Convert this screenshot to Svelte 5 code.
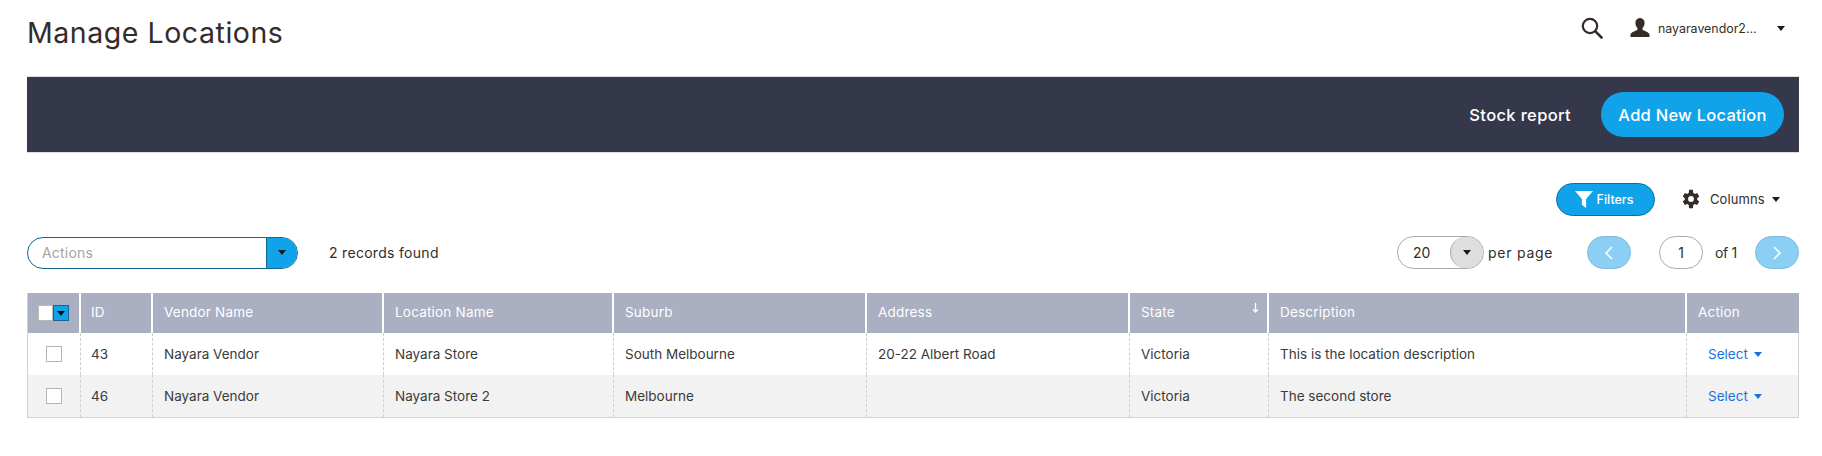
<script>
  const columns = ['ID', 'Vendor Name', 'Location Name', 'Suburb', 'Address', 'State', 'Description', 'Action'];
  const rows = [
    { id: '43', vendor: 'Nayara Vendor', location: 'Nayara Store', suburb: 'South Melbourne', address: '20-22 Albert Road', state: 'Victoria', description: 'This is the location description' },
    { id: '46', vendor: 'Nayara Vendor', location: 'Nayara Store 2', suburb: 'Melbourne', address: '', state: 'Victoria', description: 'The second store' }
  ];
</script>

<div class="page">
  <header class="top">
    <h1>Manage Locations</h1>
    <div class="top-tools">
      <svg class="search" width="22" height="22" viewBox="0 0 22 22" fill="none" stroke="#342c29" stroke-width="2.2"><circle cx="9" cy="9" r="7.2"/><path d="M14.2 14.2 20.5 20.5" stroke-linecap="round" stroke-width="2.6"/></svg>
      <svg class="user" width="20" height="20" viewBox="0 0 20 20" fill="#342c29"><path d="M10 0c-3 0-4.600 2.200-4.600 5 0 2 .8 3.800 2 5 .3.500.2 1.500-.4 2C5.500 13.200 1 14 .5 16.500V19h19v-2.500C19 14 14.500 13.200 13 12c-.6-.5-.7-1.500-.4-2 1.200-1.200 2-3 2-5 0-2.800-1.600-5-4.600-5z"/></svg>
      <span class="username">nayaravendor2...</span>
      <span class="caret dark"></span>
    </div>
  </header>

  <section class="banner">
    <span class="stock">Stock report</span>
    <button class="add">Add New Location</button>
  </section>

  <section class="tools">
    <button class="filters">
      <svg width="18" height="17" viewBox="0 0 17 16" fill="#fff"><path d="M0 0h17L10.500 7.500V16L6.500 13V7.500z"/></svg>
      Filters
    </button>
    <div class="columns">
      <svg width="20" height="20" viewBox="0 0 24 24" fill="#342c29"><path d="M19.400 13c.1-.3.1-.7.1-1s0-.7-.1-1l2.500-2-2.500-4.300-3 1.200c-.5-.4-1.100-.8-1.700-1L14.300 1H9.700l-.4 3.900c-.6.200-1.200.6-1.700 1l-3-1.200L2.100 9l2.500 2c-.1.300-.1.700-.1 1s0 .7.100 1l-2.500 2 2.500 4.300 3-1.200c.5.400 1.100.8 1.700 1l.4 3.900h4.600l.4-3.900c.6-.2 1.200-.6 1.700-1l3 1.200 2.500-4.300zM12 15.500a3.500 3.500 0 1 1 0-7 3.500 3.500 0 0 1 0 7z"/></svg>
      <span>Columns</span>
      <span class="caret dark"></span>
    </div>
  </section>

  <section class="list-bar">
    <div class="actions">
      <span class="placeholder">Actions</span>
      <span class="actions-btn"><span class="caret black"></span></span>
    </div>
    <span class="records">2 records found</span>
    <div class="pager">
      <div class="size">
        <span class="size-value">20</span>
        <span class="size-btn"><span class="caret black"></span></span>
      </div>
      <span class="per">per page</span>
      <button class="nav prev" aria-label="Previous"><svg width="10" height="16" viewBox="0 0 10 16" fill="none" stroke="#fff" stroke-width="1.500"><path d="M8 2 2 8l6 6"/></svg></button>
      <span class="page-no">1</span>
      <span class="of">of 1</span>
      <button class="nav next" aria-label="Next"><svg width="10" height="16" viewBox="0 0 10 16" fill="none" stroke="#fff" stroke-width="1.500"><path d="m2 2 6 6-6 6"/></svg></button>
    </div>
  </section>

  <section class="table">
    <div class="row head">
      <div class="cell check-cell">
        <span class="master"><span class="master-box"></span><span class="master-btn"><span class="caret mini"></span></span></span>
      </div>
      {#each columns as c}
        <div class="cell">
          {c}
          {#if c === 'State'}<svg class="sort" width="7" height="10" viewBox="0 0 7 10" fill="none" stroke="#fff" stroke-width="1.300"><path d="M3.500 0v9M1 6.500 3.500 9 6 6.500"/></svg>{/if}
        </div>
      {/each}
    </div>
    {#each rows as r, i}
      <div class="row body" class:alt={i === 1}>
        <div class="cell check-cell"><span class="box"></span></div>
        <div class="cell">{r.id}</div>
        <div class="cell">{r.vendor}</div>
        <div class="cell">{r.location}</div>
        <div class="cell">{r.suburb}</div>
        <div class="cell">{r.address}</div>
        <div class="cell">{r.state}</div>
        <div class="cell">{r.description}</div>
        <div class="cell select"><span>Select</span><span class="caret blue"></span></div>
      </div>
    {/each}
  </section>
</div>

<style>
  :global(body) {
    margin: 0;
    background: #fff;
    font-family: Inter, "Liberation Sans", sans-serif;
    color: #342c29;
  }
  .page {
    width: 1772px;
    margin-left: 27px;
    font-size: 14px;
  }
  button {
    font-family: inherit;
    border: 0;
    padding: 0;
  }
  .top {
    height: 76px;
    display: flex;
    justify-content: space-between;
  }
  h1 {
    margin: 15px 0 0;
    font-size: 28.500px;
    line-height: 36px;
    font-weight: 400;
    letter-spacing: 0.55px;
  }
  .top-tools {
    display: flex;
    align-items: center;
    height: 56px;
    padding-right: 14px;
  }
  .search { margin-right: 27px; }
  .user { margin-right: 8px; }
  .username { width: 119px; font-size: 12.400px; }
  .caret {
    display: inline-block;
    width: 0;
    height: 0;
    border-left: 4px solid transparent;
    border-right: 4px solid transparent;
    border-top: 5px solid #1b1b1b;
  }
  .banner {
    height: 75px;
    background: #35384b;
    border-top: 1px solid #ddd;
    border-bottom: 1px solid #ddd;
    display: flex;
    align-items: center;
    justify-content: flex-end;
    padding-right: 15px;
  }
  .stock {
    color: #fff;
    font-size: 16.500px;
    font-weight: 500;
    letter-spacing: 0.35px;
    margin-right: 30px;
  }
  .add {
    width: 183px;
    height: 45px;
    border-radius: 23px;
    background: #11a3ea;
    color: #fff;
    font-size: 16.500px;
    font-weight: 500;
    letter-spacing: 0.25px;
  }
  .tools {
    height: 32px;
    margin-top: 30px;
    display: flex;
    align-items: center;
    justify-content: flex-end;
    padding-right: 16px;
  }
  .filters {
    width: 99px;
    height: 33px;
    border: 1px solid #0f6c9d;
    border-radius: 17px;
    background: #11a3ea;
    color: #fff;
    font-size: 12.500px;
    font-weight: 500;
    display: flex;
    align-items: center;
    justify-content: center;
    gap: 4px;
    padding-right: 3px;
    margin-right: 26px;
    box-sizing: border-box;
  }
  .columns {
    display: flex;
    align-items: center;
    font-size: 13px;
    width: 102px;
  }
  .columns span:first-of-type { margin: 0 8px 0 9px; width: 54px; letter-spacing: 0.1px; }
  .list-bar {
    height: 33px;
    margin-top: 21px;
    display: flex;
    align-items: center;
  }
  .actions {
    width: 271px;
    height: 32px;
    box-sizing: border-box;
    border: 1px solid #14678f;
    border-radius: 16px;
    display: flex;
    align-items: center;
    justify-content: space-between;
    overflow: hidden;
  }
  .placeholder {
    margin-left: 14px;
    color: #a4a4a4;
    letter-spacing: 0.2px;
  }
  .actions-btn {
    width: 30px;
    height: 100%;
    background: #11a3ea;
    border-left: 1px solid #14678f;
    display: flex;
    align-items: center;
    justify-content: center;
  }
  .records { margin-left: 31px; letter-spacing: 0.3px; }
  .pager {
    margin-left: auto;
    display: flex;
    align-items: center;
  }
  .size {
    width: 87px;
    height: 33px;
    box-sizing: border-box;
    border: 1px solid #a9a9a9;
    border-radius: 17px;
    display: flex;
    align-items: center;
    justify-content: space-between;
    overflow: hidden;
  }
  .size-value { margin-left: 15px; }
  .size-btn {
    width: 32px;
    height: 100%;
    background: #dedede;
    border-left: 1px solid #a9a9a9;
    border-radius: 16px;
    display: flex;
    align-items: center;
    justify-content: center;
  }
  .per { margin-left: 4px; width: 99px; letter-spacing: 0.75px; }
  .nav {
    width: 44px;
    height: 33px;
    border-radius: 17px;
    background: #8bd0f4;
    border: 1px solid #7fb9d8;
    box-sizing: border-box;
    display: flex;
    align-items: center;
    justify-content: center;
  }
  .page-no {
    width: 44px;
    height: 33px;
    box-sizing: border-box;
    border: 1px solid #a9a9a9;
    border-radius: 17px;
    margin-left: 28px;
    display: flex;
    align-items: center;
    justify-content: center;
  }
  .of { margin-left: 12px; width: 40px; letter-spacing: -0.3px; }
  .table {
    margin-top: 24px;
    border-right: 1px solid #d2d2d2;
    border-bottom: 1px solid #d2d2d2;
    border-left: 1px solid #d2d2d2;
    font-size: 13.500px;
  }
  .row {
    display: grid;
    grid-template-columns: 53px 72px 231px 230px 253px 263px 139px 418px 1fr;
  }
  .head {
    height: 40px;
    margin-left: -1px;
    margin-right: -1px;
    padding-left: 1px;
    color: #fff;
  }
  .head .cell {
    background: #aaafc2;
    border-right: 2px solid #fff;
    padding-left: 10px;
    padding-bottom: 3px;
    letter-spacing: 0.2px;
    position: relative;
  }
  .head .cell:nth-child(n + 3) { padding-left: 11px; }
  .head .cell:last-child { border-right: 0; }
  .body { height: 42px; }
  .body.alt { background: #f2f2f2; }
  .cell {
    display: flex;
    align-items: center;
    box-sizing: border-box;
    padding-left: 11px;
  }
  .body .cell {
    border-right: 1px dashed #cfcfcf;
    color: #3a3a3a;
  }
  .body .cell:nth-child(2) { padding-left: 10px; }
  .body .cell:last-child { border-right: 0; }
  .head .check-cell, .body .check-cell {
    padding-left: 0;
    justify-content: center;
  }
  .head .check-cell { padding-bottom: 0; }
  .master { display: flex; height: 16px; }
  .master-box {
    width: 15px;
    background: #fff;
    border: 1px solid #bbb;
    box-sizing: border-box;
  }
  .master-btn {
    width: 16px;
    background: #11a3ea;
    border: 1px solid #14678f;
    box-sizing: border-box;
    display: flex;
    align-items: center;
    justify-content: center;
  }
  .caret.mini { border-top-color: #111; }
  .box {
    width: 16px;
    height: 16px;
    box-sizing: border-box;
    border: 1px solid #b5b5b5;
    background: #fff;
  }
  .sort {
    position: absolute;
    right: 8px;
    top: 10px;
  }
  .body .select {
    color: #1a73dd;
    padding-left: 21px;
    gap: 6px;
  }
  .caret.blue { border-top-color: #1a73dd; }
</style>
